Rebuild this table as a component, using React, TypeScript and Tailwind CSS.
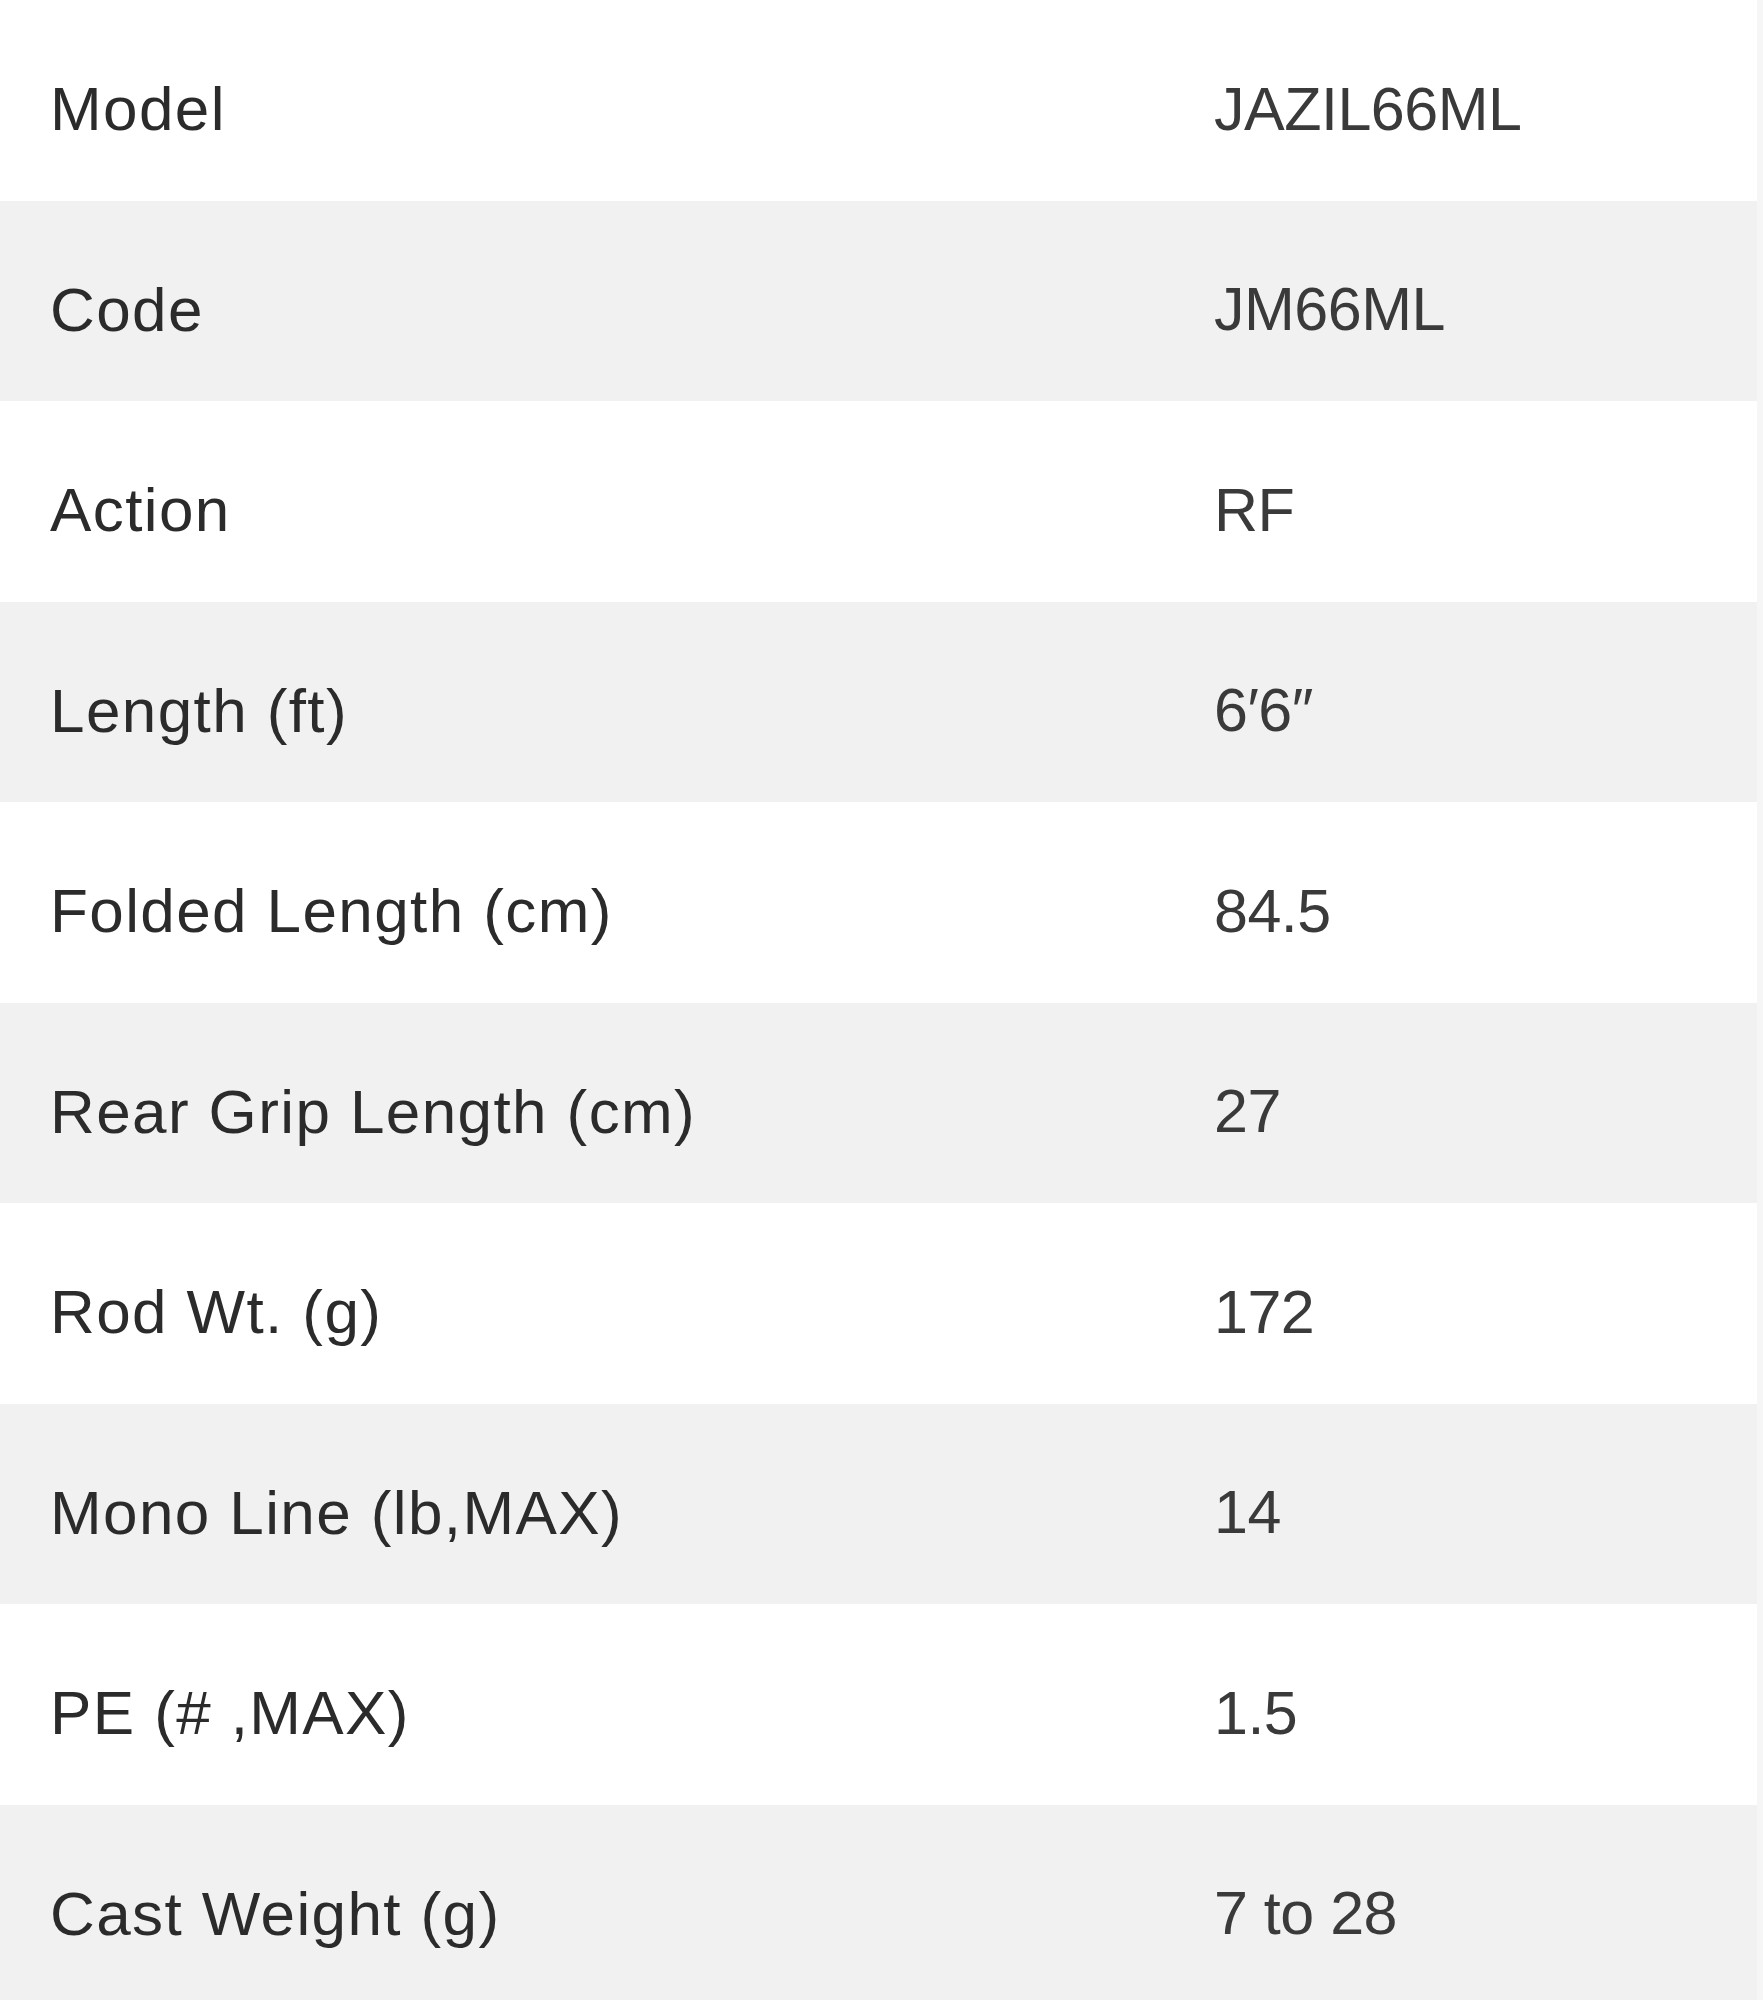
import React from "react";

const rows: [string, string][] = [
  ["Model", "JAZIL66ML"],
  ["Code", "JM66ML"],
  ["Action", "RF"],
  ["Length (ft)", "6′6″"],
  ["Folded Length (cm)", "84.5"],
  ["Rear Grip Length (cm)", "27"],
  ["Rod Wt. (g)", "172"],
  ["Mono Line (lb,MAX)", "14"],
  ["PE (# ,MAX)", "1.5"],
  ["Cast Weight (g)", "7 to 28"],
];

export default function App() {
  return (
    <div
      className="w-[1763px] h-[2000px] overflow-hidden bg-[#f6f6f6]"
      style={{ fontFamily: '"Liberation Sans", Arial, sans-serif' }}
    >
      <div className="w-[1757px] flex flex-col">
        {rows.map(([k, v], i) => (
          <div
            key={k}
            className={
              "h-[200.5px] flex items-center pt-[18px] " +
              (i % 2 === 0 ? "bg-white" : "bg-[#f1f1f1]")
            }
          >
            <div className="w-[1214px] pl-[50px] text-[62px] leading-none tracking-[1.4px] text-[#2b2b2b] whitespace-nowrap">
              {k}
            </div>
            <div className="flex-1 text-[61px] leading-none tracking-[-0.5px] text-[#3a3a3a] whitespace-nowrap">
              {v}
            </div>
          </div>
        ))}
      </div>
    </div>
  );
}
